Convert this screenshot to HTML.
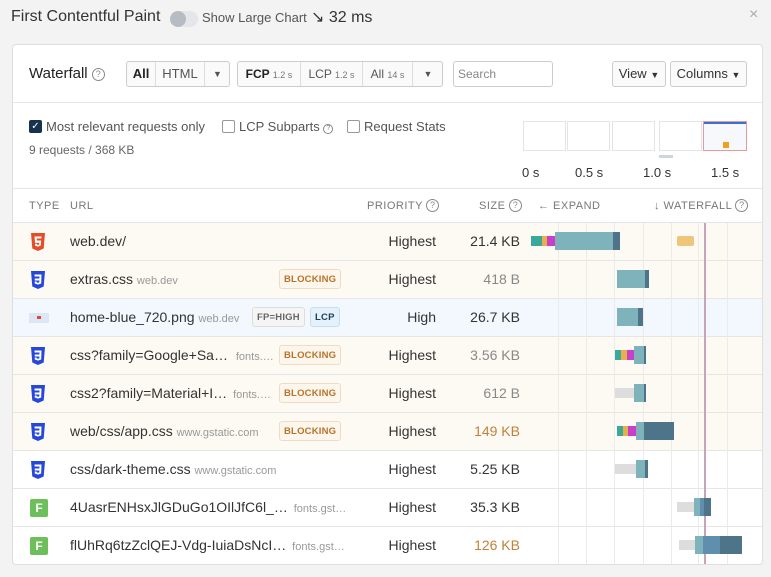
<!DOCTYPE html>
<html><head><meta charset="utf-8"><style>
*{box-sizing:border-box;margin:0;padding:0}
body{width:771px;height:577px;background:#f3f3f3;font-family:"Liberation Sans",sans-serif;color:#333;position:relative;overflow:hidden}
.a{position:absolute;white-space:nowrap}
.card{position:absolute;left:12px;top:44px;width:751px;height:521px;background:#fff;border:1px solid #dedede;border-radius:4px;overflow:hidden}
.btn{position:absolute;border:1px solid #ccc;border-radius:3px;background:#fafafa;height:26px;font-size:13px;line-height:24px;color:#555;white-space:nowrap}
.seg{position:absolute;top:0;height:24px;border-left:1px solid #ddd;text-align:center;white-space:nowrap}
.sm{font-size:9px;color:#777}
.q{display:inline-block;width:13px;height:13px;border:1px solid #888;border-radius:50%;font-size:9px;line-height:11px;text-align:center;color:#888;vertical-align:1px}
.cb{position:absolute;width:13px;height:13px;border:1px solid #999;border-radius:2px;background:#fff}
.row{position:absolute;left:0;width:751px;height:38px;border-top:1px solid #e6e6e6}
.url{position:absolute;left:57px;top:10px;font-size:14px;color:#333;white-space:nowrap}
.dom{font-size:11px;color:#999}
.pr{position:absolute;right:328px;top:10px;font-size:14px}
.sz{position:absolute;right:244px;top:10px;font-size:14px}
.tag{position:absolute;top:8px;height:20px;border:1px solid #f0dcc2;background:#fdf6ec;color:#b9742a;font-size:9.5px;font-weight:bold;display:flex;align-items:center;padding:0 4px;border-radius:3px;letter-spacing:.2px;white-space:nowrap}
.ic{position:absolute;left:17px;top:10px;width:16px;height:18px}
.b{position:absolute;height:18px}
.g{position:absolute;height:10px;background:#ddd}
</style></head><body>
<div class="a" style="left:11px;top:8px;font-size:16px;color:#333">First Contentful Paint</div>
<div class="a" style="left:170px;top:11px;width:28px;height:16px;border-radius:8px;background:#e4e6ea"></div>
<div class="a" style="left:170px;top:11px;width:16px;height:16px;border-radius:8px;background:#b7bcc4"></div>
<div class="a" style="left:202px;top:10px;font-size:13px;color:#555">Show Large Chart</div>
<div class="a" style="left:311px;top:7px;font-size:16px;color:#333">↘ 32 ms</div>
<div class="a" style="left:749px;top:6px;font-size:16px;color:#aaa">×</div>

<div class="card">
<div class="a" style="left:16px;top:20px;font-size:15px;color:#222">Waterfall <span class="q">?</span></div>
<div class="btn" style="left:113px;top:16px;width:104px"><div class="seg" style="left:0;width:28px;border:0;font-weight:bold;color:#222">All</div><div class="seg" style="left:28px;width:49px">HTML</div><div class="seg" style="left:77px;width:26px;font-size:9px">▼</div></div>
<div class="btn" style="left:224px;top:16px;width:206px;font-size:12px"><div class="seg" style="left:0;width:62px;border:0;font-weight:bold;color:#222">FCP <span class="sm" style="font-weight:normal">1.2 s</span></div><div class="seg" style="left:62px;width:62px">LCP <span class="sm">1.2 s</span></div><div class="seg" style="left:124px;width:50px">All <span class="sm">14 s</span></div><div class="seg" style="left:174px;width:31px;font-size:9px">▼</div></div>
<div class="btn" style="left:440px;top:16px;width:100px;background:#fff;padding-left:4px;color:#888;font-size:12px">Search</div>
<div class="btn" style="left:599px;top:16px;width:54px;text-align:center;color:#333">View <span style="font-size:9px">▼</span></div>
<div class="btn" style="left:657px;top:16px;width:77px;text-align:center;color:#333">Columns <span style="font-size:9px">▼</span></div>
<div class="a" style="left:0;top:57px;width:751px;border-top:1px solid #e6e6e6"></div>

<div class="cb" style="left:16px;top:75px;background:#17324d;border-color:#17324d;color:#fff;font-size:10px;line-height:11px;text-align:center">✓</div>
<div class="a" style="left:33px;top:74px;font-size:13px;color:#555">Most relevant requests only</div>
<div class="cb" style="left:209px;top:75px"></div>
<div class="a" style="left:226px;top:74px;font-size:13px;color:#555">LCP Subparts <span class="q" style="width:10px;height:10px;font-size:7px;line-height:8px">?</span></div>
<div class="cb" style="left:334px;top:75px"></div>
<div class="a" style="left:351px;top:74px;font-size:13px;color:#555">Request Stats</div>
<div class="a" style="left:16px;top:98px;font-size:12px;color:#666">9 requests / 368 KB</div>
<div class="a" style="left:510px;top:76px;width:43px;height:30px;border:1px solid #e4e4e4"></div>
<div class="a" style="left:554px;top:76px;width:43px;height:30px;border:1px solid #e4e4e4"></div>
<div class="a" style="left:599px;top:76px;width:43px;height:30px;border:1px solid #e4e4e4"></div>
<div class="a" style="left:646px;top:76px;width:43px;height:30px;border:1px solid #e4e4e4"></div>
<div class="a" style="left:690px;top:76px;width:44px;height:30px;border:1px solid #e49a9a;background:#f6f8fb"><div style="height:2px;background:#3b6fd1"></div><div style="position:absolute;left:19px;top:20px;width:6px;height:6px;background:#f0a020"></div></div>
<div class="a" style="left:646px;top:110px;width:14px;height:3px;background:#ccd6e0"></div>
<div class="a" style="left:509px;top:120px;font-size:13px;color:#333">0 s</div>
<div class="a" style="left:562px;top:120px;font-size:13px;color:#333">0.5 s</div>
<div class="a" style="left:630px;top:120px;font-size:13px;color:#333">1.0 s</div>
<div class="a" style="left:698px;top:120px;font-size:13px;color:#333">1.5 s</div>
<div class="a" style="left:0;top:143px;width:751px;border-top:1px solid #e6e6e6"></div>

<div class="a" style="left:16px;top:155px;font-size:11px;color:#777;letter-spacing:.5px">TYPE</div>
<div class="a" style="left:57px;top:155px;font-size:11px;color:#777;letter-spacing:.5px">URL</div>
<div class="a" style="left:354px;top:154px;font-size:11px;color:#777;letter-spacing:.5px">PRIORITY <span class="q">?</span></div>
<div class="a" style="left:466px;top:154px;font-size:11px;color:#777;letter-spacing:.5px">SIZE <span class="q">?</span></div>
<div class="a" style="left:525px;top:155px;font-size:11px;color:#777;letter-spacing:.5px">← EXPAND</div>
<div class="a" style="left:641px;top:154px;font-size:11px;color:#777;letter-spacing:.5px">↓ WATERFALL <span class="q">?</span></div>

<div class="row" style="top:177px;background:#fdfaf3"><svg class="ic" viewBox="0 0 16 18"><path d="M1 0h14l-1.3 15.5L8 18l-5.7-2.5z" fill="#e44d26"/><path d="M4.5 3.5h7l-.2 2H6.7l.15 2h4.3l-.4 5L8 13.6l-2.8-.9-.15-2h1.9l.1.9 1 .3 1-.3.15-1.7H5z" fill="#fff"/></svg><div class="url">web.dev/</div><div class="pr">Highest</div><div class="sz">21.4 KB</div></div>
<div class="row" style="top:215px;background:#fdfaf3"><svg class="ic" viewBox="0 0 16 18"><path d="M1 0h14l-1.3 15.5L8 18l-5.7-2.5z" fill="#2648d8"/><path d="M4.5 3.5h7l-.3 9L8 13.6l-3.2-1.1-.1-2h1.9l.1.9 1.3.4 1.3-.4.1-1.9H4.8l-.1-2h4.7l.1-2H4.6z" fill="#fff"/></svg><div class="url">extras.css <span class="dom">web.dev</span></div><div class="tag" style="left:266px">BLOCKING</div><div class="pr">Highest</div><div class="sz" style="color:#888">418 B</div></div>
<div class="row" style="top:253px;background:#f2f8fd"><div class="ic" style="left:16px;top:14px;width:20px;height:10px;background:#dde6f5"><div style="position:absolute;left:8px;top:3px;width:4px;height:3px;background:#e04444"></div></div><div class="url">home-blue_720.png <span class="dom">web.dev</span></div><div class="tag" style="left:239px;background:#f5f5f5;border-color:#ddd;color:#666">FP=HIGH</div><div class="tag" style="left:297px;background:#e4f1fa;border-color:#c4def0;color:#1b3d5a">LCP</div><div class="pr">High</div><div class="sz">26.7 KB</div></div>
<div class="row" style="top:291px;background:#fdfaf3"><svg class="ic" viewBox="0 0 16 18"><path d="M1 0h14l-1.3 15.5L8 18l-5.7-2.5z" fill="#2648d8"/><path d="M4.5 3.5h7l-.3 9L8 13.6l-3.2-1.1-.1-2h1.9l.1.9 1.3.4 1.3-.4.1-1.9H4.8l-.1-2h4.7l.1-2H4.6z" fill="#fff"/></svg><div class="url">css?family=Google+Sa… <span class="dom" style="margin-left:4px">fonts.…</span></div><div class="tag" style="left:266px">BLOCKING</div><div class="pr">Highest</div><div class="sz" style="color:#888">3.56 KB</div></div>
<div class="row" style="top:329px;background:#fdfaf3"><svg class="ic" viewBox="0 0 16 18"><path d="M1 0h14l-1.3 15.5L8 18l-5.7-2.5z" fill="#2648d8"/><path d="M4.5 3.5h7l-.3 9L8 13.6l-3.2-1.1-.1-2h1.9l.1.9 1.3.4 1.3-.4.1-1.9H4.8l-.1-2h4.7l.1-2H4.6z" fill="#fff"/></svg><div class="url">css2?family=Material+I… <span class="dom" style="margin-left:2px">fonts.…</span></div><div class="tag" style="left:266px">BLOCKING</div><div class="pr">Highest</div><div class="sz" style="color:#888">612 B</div></div>
<div class="row" style="top:367px;background:#fdfaf3"><svg class="ic" viewBox="0 0 16 18"><path d="M1 0h14l-1.3 15.5L8 18l-5.7-2.5z" fill="#2648d8"/><path d="M4.5 3.5h7l-.3 9L8 13.6l-3.2-1.1-.1-2h1.9l.1.9 1.3.4 1.3-.4.1-1.9H4.8l-.1-2h4.7l.1-2H4.6z" fill="#fff"/></svg><div class="url">web/css/app.css <span class="dom">www.gstatic.com</span></div><div class="tag" style="left:266px">BLOCKING</div><div class="pr">Highest</div><div class="sz" style="color:#c0823a">149 KB</div></div>
<div class="row" style="top:405px"><svg class="ic" viewBox="0 0 16 18"><path d="M1 0h14l-1.3 15.5L8 18l-5.7-2.5z" fill="#2648d8"/><path d="M4.5 3.5h7l-.3 9L8 13.6l-3.2-1.1-.1-2h1.9l.1.9 1.3.4 1.3-.4.1-1.9H4.8l-.1-2h4.7l.1-2H4.6z" fill="#fff"/></svg><div class="url">css/dark-theme.css <span class="dom">www.gstatic.com</span></div><div class="pr">Highest</div><div class="sz">5.25 KB</div></div>
<div class="row" style="top:443px"><div class="ic" style="width:18px;height:18px;background:#6cbf5a;border-radius:2px;color:#fff;font-weight:bold;font-size:12px;text-align:center;line-height:18px">F</div><div class="url">4UasrENHsxJlGDuGo1OIlJfC6l_… <span class="dom" style="margin-left:2px">fonts.gst…</span></div><div class="pr">Highest</div><div class="sz">35.3 KB</div></div>
<div class="row" style="top:481px"><div class="ic" style="width:18px;height:18px;background:#6cbf5a;border-radius:2px;color:#fff;font-weight:bold;font-size:12px;text-align:center;line-height:18px">F</div><div class="url">flUhRq6tzZclQEJ-Vdg-IuiaDsNcI… <span class="dom" style="margin-left:2px">fonts.gst…</span></div><div class="pr">Highest</div><div class="sz" style="color:#c0823a">126 KB</div></div>

<div class="a" style="left:545px;top:178px;height:342px;border-left:1px solid #ebebeb"></div>
<div class="a" style="left:573px;top:178px;height:342px;border-left:1px solid #ebebeb"></div>
<div class="a" style="left:601px;top:178px;height:342px;border-left:1px solid #ebebeb"></div>
<div class="a" style="left:630px;top:178px;height:342px;border-left:1px solid #ebebeb"></div>
<div class="a" style="left:658px;top:178px;height:342px;border-left:1px solid #ebebeb"></div>
<div class="a" style="left:685px;top:178px;height:342px;border-left:1px solid #ebebeb"></div>
<div class="a" style="left:714px;top:178px;height:342px;border-left:1px solid #ebebeb"></div>
<div class="a" style="left:691px;top:178px;height:342px;border-left:2px solid #c9a3b8"></div>

<div class="b" style="left:518px;width:11px;height:10px;top:191px;background:#3aa89a"></div>
<div class="b" style="top:191px;left:529px;width:5px;height:10px;background:#e8b04a"></div>
<div class="b" style="top:191px;left:534px;width:8px;height:10px;background:#c83fc8"></div>
<div class="b" style="top:187px;left:542px;width:58px;background:#7fb3bb"></div>
<div class="b" style="top:187px;left:600px;width:7px;background:#4d7488"></div>
<div class="b" style="top:191px;left:664px;width:17px;height:10px;background:#efc57a;border-radius:2px"></div>

<div class="b" style="top:225px;left:604px;width:28px;background:#7fb3bb"></div>
<div class="b" style="top:225px;left:632px;width:4px;background:#4d7488"></div>

<div class="b" style="top:263px;left:604px;width:21px;background:#7fb3bb"></div>
<div class="b" style="top:263px;left:625px;width:5px;background:#4d7488"></div>

<div class="b" style="top:305px;left:602px;width:6px;height:10px;background:#3aa89a"></div>
<div class="b" style="top:305px;left:608px;width:6px;height:10px;background:#e8b04a"></div>
<div class="b" style="top:305px;left:614px;width:7px;height:10px;background:#c83fc8"></div>
<div class="b" style="top:301px;left:621px;width:10px;background:#7fb3bb"></div>
<div class="b" style="top:301px;left:631px;width:2px;background:#4d7488"></div>

<div class="g" style="top:343px;left:602px;width:19px"></div>
<div class="b" style="top:339px;left:621px;width:10px;background:#7fb3bb"></div>
<div class="b" style="top:339px;left:631px;width:2px;background:#4d7488"></div>

<div class="b" style="top:381px;left:604px;width:6px;height:10px;background:#3aa89a"></div>
<div class="b" style="top:381px;left:610px;width:5px;height:10px;background:#e8b04a"></div>
<div class="b" style="top:381px;left:615px;width:8px;height:10px;background:#c83fc8"></div>
<div class="b" style="top:377px;left:623px;width:8px;background:#7fb3bb"></div>
<div class="b" style="top:377px;left:631px;width:30px;background:#4d7488"></div>

<div class="g" style="top:419px;left:602px;width:21px"></div>
<div class="b" style="top:415px;left:623px;width:9px;background:#7fb3bb"></div>
<div class="b" style="top:415px;left:632px;width:3px;background:#4d7488"></div>

<div class="g" style="top:457px;left:664px;width:17px"></div>
<div class="b" style="top:453px;left:681px;width:6px;background:#7fb3bb"></div>
<div class="b" style="top:453px;left:687px;width:4px;background:#5f8fad"></div>
<div class="b" style="top:453px;left:691px;width:7px;background:#4d7488"></div>

<div class="g" style="top:495px;left:666px;width:16px"></div>
<div class="b" style="top:491px;left:682px;width:8px;background:#7fb3bb"></div>
<div class="b" style="top:491px;left:690px;width:17px;background:#5f8fad"></div>
<div class="b" style="top:491px;left:707px;width:22px;background:#4d7488"></div>
</div>
</body></html>
